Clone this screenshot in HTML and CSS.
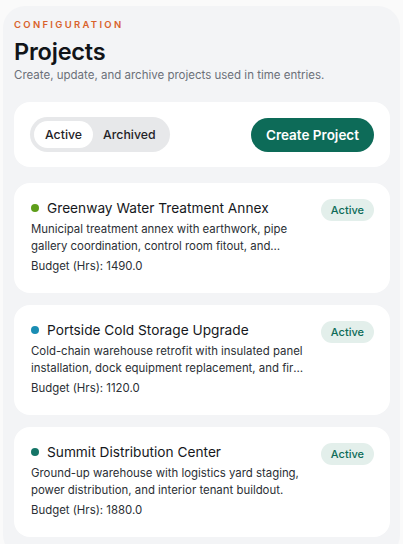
FILE: index.html
```html
<!DOCTYPE html>
<html lang="en">

<head>
    <meta charset="UTF-8" />
    <meta name="viewport" content="width=device-width, initial-scale=1.0" />
    <title>Projects - Configuration</title>
    <link rel="stylesheet" href="styles.css">
</head>

<body>
    <div class="panel">
        <div class="eyebrow">Configuration</div>
        <h1>Projects</h1>
        <p class="subtitle">Create, update, and archive projects used in time entries.</p>

        <div class="toolbar">
            <div class="segmented">
                <button class="seg seg-active">Active</button>
                <button class="seg">Archived</button>
            </div>
            <button class="create-button">Create Project</button>
        </div>

        <div class="project-list">
            <div class="project-card">
                <div class="project-info">
                    <div class="project-title">
                        <span class="dot dot-lime"></span>
                        Greenway Water Treatment Annex
                    </div>
                    <p class="project-desc">Municipal treatment annex with earthwork, pipe gallery coordination, control room fitout, and commissioning support.</p>
                    <div class="project-budget">Budget (Hrs): 1490.0</div>
                </div>
                <span class="badge">Active</span>
            </div>

            <div class="project-card">
                <div class="project-info">
                    <div class="project-title">
                        <span class="dot dot-blue"></span>
                        Portside Cold Storage Upgrade
                    </div>
                    <p class="project-desc">Cold-chain warehouse retrofit with insulated panel installation, dock equipment replacement, and fire protection upgrades.</p>
                    <div class="project-budget">Budget (Hrs): 1120.0</div>
                </div>
                <span class="badge">Active</span>
            </div>

            <div class="project-card">
                <div class="project-info">
                    <div class="project-title">
                        <span class="dot dot-teal"></span>
                        Summit Distribution Center
                    </div>
                    <p class="project-desc">Ground-up warehouse with logistics yard staging, power distribution, and interior tenant buildout.</p>
                    <div class="project-budget">Budget (Hrs): 1880.0</div>
                </div>
                <span class="badge">Active</span>
            </div>
        </div>
    </div>
</body>

</html>
```

FILE: styles.css
```css
body {
    font-family: 'Inter', 'Noto Sans', sans-serif;
    margin: 0;
    background-color: #fafafa;
    color: #111418;
}

.panel {
    margin: 6px 3px 0;
    padding: 13px 10px 20px 11px;
    background-color: #f3f4f6;
    border-radius: 22px;
}

.eyebrow {
    font-size: 9.5px;
    font-weight: 600;
    letter-spacing: 2.3px;
    text-transform: uppercase;
    color: #d9622b;
}

h1 {
    margin: 7px 0 0;
    font-size: 23.5px;
    font-weight: 600;
    letter-spacing: -0.2px;
    line-height: 30px;
}

.subtitle {
    margin: 1px 0 0;
    font-size: 11.5px;
    color: #6b7079;
}

.toolbar {
    display: flex;
    justify-content: space-between;
    align-items: center;
    margin-top: 20px;
    padding: 15px 16px;
    background-color: #ffffff;
    border-radius: 16px;
}

.segmented {
    display: flex;
    padding: 4px;
    background-color: #e7e8ea;
    border-radius: 18px;
}

.seg {
    font-family: inherit;
    font-size: 12.3px;
    font-weight: 500;
    color: #1f2328;
    background: none;
    border: none;
    padding: 0 10px;
    height: 27px;
    border-radius: 14px;
}

.seg-active {
    background-color: #ffffff;
    padding: 0 11px;
}

.create-button {
    font-family: inherit;
    font-size: 13.5px;
    font-weight: 600;
    color: #ffffff;
    background-color: #0d6b58;
    border: none;
    border-radius: 18px;
    height: 34px;
    padding: 0 15px;
}

.project-list {
    display: flex;
    flex-direction: column;
    gap: 12px;
    margin-top: 16px;
}

.project-card {
    display: flex;
    justify-content: space-between;
    align-items: flex-start;
    gap: 14px;
    padding: 15px 16px 19px 17px;
    background-color: #ffffff;
    border-radius: 16px;
}

.project-info {
    flex: 1;
    min-width: 0;
}

.project-title {
    display: flex;
    align-items: center;
    gap: 8px;
    font-size: 13.7px;
    font-weight: 400;
    line-height: 20px;
    color: #15181c;
}

.dot {
    width: 8px;
    height: 8px;
    border-radius: 50%;
    flex-shrink: 0;
}

.dot-lime {
    background-color: #5e9e1a;
}

.dot-blue {
    background-color: #1a8db3;
}

.dot-teal {
    background-color: #157567;
}

.project-desc {
    margin: 3px 0 0;
    font-size: 11.4px;
    line-height: 17px;
    color: #2b2f35;
    display: -webkit-box;
    -webkit-line-clamp: 2;
    -webkit-box-orient: vertical;
    overflow: hidden;
}

.project-budget {
    margin-top: 3px;
    font-size: 11.4px;
    line-height: 16px;
    color: #2b2f35;
}

.badge {
    flex-shrink: 0;
    margin-top: 1px;
    font-size: 11px;
    font-weight: 500;
    color: #0d6b58;
    background-color: #e3efeb;
    border-radius: 11px;
    padding: 0 10px;
    height: 22px;
    line-height: 22px;
}
```
